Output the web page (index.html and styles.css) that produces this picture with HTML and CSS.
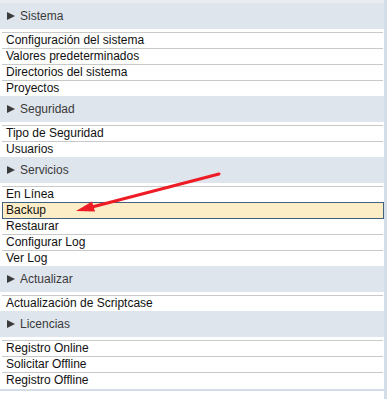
FILE: index.html
```html
<!DOCTYPE html>
<html>
<head>
    <title>Menu</title>
    <link rel="stylesheet" href="styles.css">
</head>
<body>
    <div class="panel">
        <div class="topbar"></div>

        <div class="section">Sistema</div>
        <ul class="items">
            <li>Configuración del sistema</li>
            <li>Valores predeterminados</li>
            <li>Directorios del sistema</li>
            <li>Proyectos</li>
        </ul>

        <div class="section">Seguridad</div>
        <ul class="items">
            <li>Tipo de Seguridad</li>
            <li>Usuarios</li>
        </ul>

        <div class="section">Servicios</div>
        <ul class="items">
            <li>En Línea</li>
            <li class="active">Backup</li>
            <li>Restaurar</li>
            <li>Configurar Log</li>
            <li>Ver Log</li>
        </ul>

        <div class="section">Actualizar</div>
        <ul class="items">
            <li>Actualización de Scriptcase</li>
        </ul>

        <div class="section">Licencias</div>
        <ul class="items">
            <li>Registro Online</li>
            <li>Solicitar Offline</li>
            <li>Registro Offline</li>
        </ul>
        <div class="bottom"></div>
    </div>

    <svg class="arrow" width="387" height="399" viewBox="0 0 387 399">
        <line x1="219" y1="174" x2="92" y2="207" stroke="#ee1c24" stroke-width="3" stroke-linecap="round"/>
        <polygon points="76,211 92,201.5 95,211.5" fill="#ee1c24"/>
    </svg>
</body>
</html>
```

FILE: styles.css
```css
body {
    margin: 0;
    font-family: Arial, "Liberation Sans", sans-serif;
    font-size: 12px;
    background: #fff;
}
.panel {
    width: 384px;
    border-right: 3px solid #d3dde7;
    min-height: 399px;
    box-sizing: border-box;
    width: 387px;
}
.topbar {
    height: 3px;
    background: #e9edf2;
    border-bottom: 0;
}
.section {
    height: 26px;
    background: #dfe5ed;
    color: #3a3a3a;
    display: flex;
    align-items: center;
    padding-left: 20px;
    position: relative;
}
.section::before {
    content: "";
    position: absolute;
    left: 7px;
    top: 9px;
    border-left: 8px solid #3a3a3a;
    border-top: 4.5px solid transparent;
    border-bottom: 4.5px solid transparent;
}
.items {
    list-style: none;
    margin: 3px 1px 0 2px;
    padding: 0;
    background: #fff;
}
.items li {
    border-top: 1px solid #c9c9c9;
    height: 15px;
    line-height: 15px;
    padding-left: 4px;
    color: #111;
}
.items li.active {
    position: relative;
    background: #fdedc6;
    border: 1px solid #43607c;
    margin-bottom: -1px;
    margin-right: -1px;
    padding-left: 3px;
}
.bottom {
    border-top: 2px solid #d3dde7;
    margin-top: 1px;
}
.arrow {
    position: absolute;
    left: 0;
    top: 0;
    pointer-events: none;
}
```
